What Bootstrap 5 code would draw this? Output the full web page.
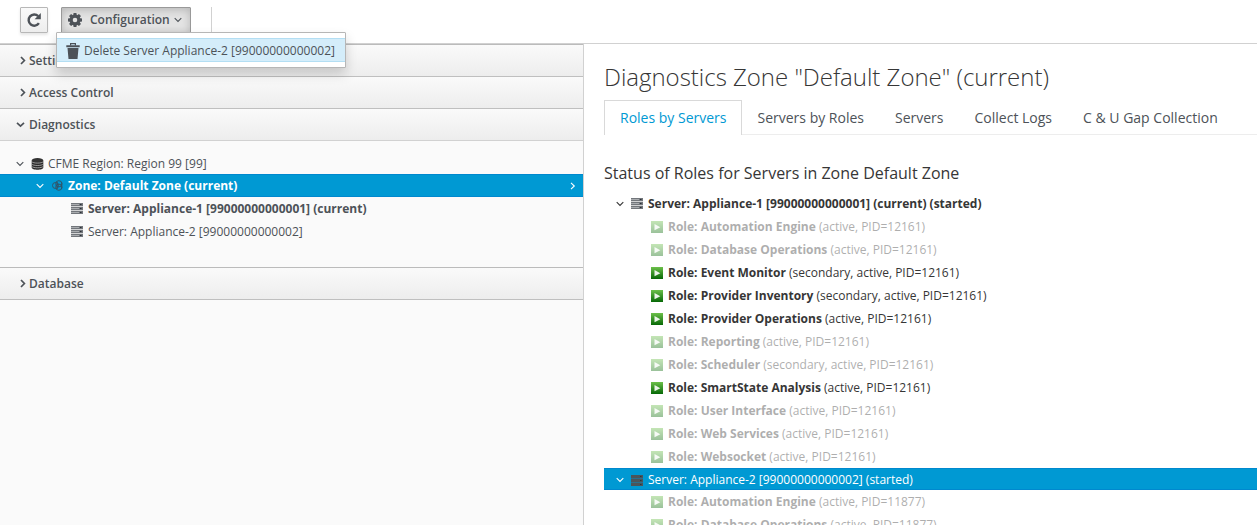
<!DOCTYPE html>
<html lang="en">
<head>
<meta charset="utf-8">
<title>Configuration: Diagnostics</title>
<link href="https://cdn.jsdelivr.net/npm/bootstrap@5.3.0/dist/css/bootstrap.min.css" rel="stylesheet">
<style>
body{font-family:"Open Sans","Noto Sans",sans-serif;font-size:12px;line-height:20px;color:#363636;height:525px;overflow:hidden;background:#fff}
svg{display:block;flex:none}
.topbar{height:44px;padding:7px 0 0 20px;border-bottom:1px solid #d1d1d1}
.tool{height:26px;padding:0;border:1px solid #b7b7b7;border-radius:1px;background:linear-gradient(#fafafa,#ededed);color:#4d5258;font-size:12px;font-weight:600;line-height:22px;box-shadow:0 2px 3px rgba(3,3,3,.1)}
.tool.open{background:#e3e3e3;border-color:#999;box-shadow:inset 0 2px 8px rgba(3,3,3,.2)}
.tool:hover{color:#4d5258}
.tool-sep{width:1px;height:25px;background:#d1d1d1;margin-left:20px}
.tool-menu{top:25px;left:-5px;width:290px;height:36px;padding:5px 0;border:1px solid #b6b6b6;border-radius:1px;box-shadow:0 6px 12px rgba(0,0,0,.175);margin:0}
.tool-menu .dropdown-item{height:24px;padding:2px 0 0 9px;font-size:12px;line-height:22px;background:#d4edfa;border:solid #b3def3;border-width:1px 0;color:#4d5258}
.sidebar{width:584px;height:481px;background:#fafafa;border-right:1px solid #d1d1d1;color:#4d5258}
.sidebar .heading{height:32px;padding-left:18px;border-bottom:1px solid #bfbfbf;background:linear-gradient(#fafafa,#ededed);font-weight:600;gap:2px}
.sidebar .heading.first{height:33px;border-top:1px solid #bbb}
.sidebar .heading.last{height:33px;border-top:1px solid #bbb}
.sidebar .heading.expanded{border-bottom-color:#d1d1d1}
.tree-area{height:126px;padding-top:11px}
.tree-row{height:23px;white-space:pre}
.tree-row .node-icon{margin-right:4px}
.tree-row.chosen{background:#0099d3;border:solid #0088ce;border-width:1px 0;color:#fff}
.main{padding:0 0 0 20px;min-width:0}
.main h1{font-size:24px;font-weight:300;line-height:26px;margin:20px 0 10px;white-space:nowrap;letter-spacing:-.02px}
.main h3{font-size:16px;font-weight:400;line-height:18px;margin:29px 0 10px}
.main .nav-tabs{height:35px;border-bottom:1px solid #ededed;font-size:14px;line-height:20px}
.main .nav-tabs .nav-link{height:35px;border:1px solid transparent;border-bottom:0;border-radius:0;padding:7px 14px 7px 15px;color:#4d5258;margin:0;white-space:nowrap}
.main .nav-tabs .nav-link.active{color:#0099d3;border-color:#d9d9d9;background:#fff}
.muted-row{opacity:.4}
.role-pad{padding-left:47px}
</style>
</head>
<body>
<svg width="0" height="0" class="position-absolute">
<defs>
<linearGradient id="green" x1="0" y1="0" x2="0" y2="1"><stop offset="0" stop-color="#6cc04a"/><stop offset="1" stop-color="#066806"/></linearGradient>
<symbol id="down" viewBox="0 0 8 8"><path d="M.7 2.2 4 5.5 7.3 2.2" fill="none" stroke="currentColor" stroke-width="1.1"/></symbol>
<symbol id="down-b" viewBox="0 0 9 9"><path d="M1 2.8 4.5 6.1 8 2.8" fill="none" stroke="currentColor" stroke-width="1.7"/></symbol>
<symbol id="right-b" viewBox="0 0 9 9"><path d="M3 1 6.4 4.5 3 8" fill="none" stroke="currentColor" stroke-width="1.7"/></symbol>
<symbol id="server" viewBox="0 0 12 11"><path d="M0 0h12v3H0zM0 4h12v3H0zM0 8h12v3H0z" fill="#72767b"/><path d="M0 1.5h8M0 5.5h8M0 9.5h8" stroke="#a9acaf"/><path d="M9 1h1.5v1H9zM9 5h1.5v1H9zM9 9h1.5v1H9z" fill="#292e34"/><path d="M0 3.5h12M0 7.5h12" stroke="#d2d3d4"/></symbol>
<symbol id="server-on" viewBox="0 0 12 11"><path d="M0 0h12v3H0zM0 4h12v3H0zM0 8h12v3H0z" fill="#4b555b"/><path d="M0 3.5h12M0 7.5h12" stroke="#2b6f8e"/><path d="M9 1h1.5v1H9zM9 5h1.5v1H9zM9 9h1.5v1H9z" fill="#263842"/></symbol>
<symbol id="role" viewBox="0 0 12 12"><path d="M0 0h12v12H0z" fill="url(#green)"/><path d="M3.5 3v6.3L9.3 6.2z" fill="#fff" fill-opacity=".9"/></symbol>
</defs>
</svg>

<header class="topbar d-flex align-items-start">
  <button class="btn tool d-flex align-items-center justify-content-center" style="width:28px" aria-label="Reload">
    <svg width="16" height="16" viewBox="0 0 16 16"><path d="M12.9 11.2A5.6 5.6 0 1 1 12.2 4.1" fill="none" stroke="#4d5258" stroke-width="2.4"/><path d="M14.8 1v6.2H8.6z" fill="#4d5258"/></svg>
  </button>
  <div class="position-relative" style="margin-left:13px">
    <button class="btn tool open d-flex align-items-center" style="width:130px;padding-left:6px">
      <svg width="14" height="14" viewBox="-7 -7 14 14"><g fill="#4d5258"><path id="cog" d="M-1.4-7h2.8l.6 3h-4zM-1.4 7h2.8l.6-3h-4zM-7-1.4v2.8l3 .6v-4zM7-1.4v2.8l-3 .6v-4z"/><use href="#cog" transform="rotate(45)"/></g><circle r="3.8" fill="none" stroke="#4d5258" stroke-width="3"/></svg>
      <span style="margin:-1px 4px 0 8px">Configuration</span>
      <svg width="8" height="8"><use href="#down"/></svg>
    </button>
    <div class="dropdown-menu tool-menu show">
      <a class="dropdown-item d-flex align-items-center" href="#">
        <svg width="14" height="16" viewBox="0 0 14 16" style="margin-right:4px"><path d="M4.6 2.5V.7h4.8v1.8" fill="none" stroke="#4d5258" stroke-width="1.2"/><path d="M.3 2.2h13.4v2H.3zM1.5 5h11l-1 11h-9z" fill="#4d5258"/></svg>
        <span>Delete Server Appliance-2 [99000000000002]</span>
      </a>
    </div>
  </div>
  <div class="tool-sep"></div>
</header>

<div class="d-flex">
  <aside class="sidebar flex-shrink-0">
    <div class="heading first d-flex align-items-center"><svg width="9" height="9"><use href="#right-b"/></svg>Settings</div>
    <div class="heading d-flex align-items-center"><svg width="9" height="9"><use href="#right-b"/></svg>Access Control</div>
    <div class="heading expanded d-flex align-items-center"><svg width="9" height="9" style="margin-left:-2px;margin-right:2px"><use href="#down-b"/></svg>Diagnostics</div>
    <div class="tree-area">
      <div class="tree-row d-flex align-items-center" style="padding:2px 0 0 16px;height:22px"><svg width="8" height="8" style="margin-right:7px"><use href="#down"/></svg><svg class="node-icon" width="13" height="12" viewBox="0 0 13 12"><path d="M.7 2.4v7.2c0 3 11.6 3 11.6 0V2.4z" fill="#292929"/><ellipse cx="6.5" cy="2.3" rx="5.8" ry="2.2" fill="#333"/><path d="M.7 3.6c1.5 2 10.1 2 11.6 0M.7 6c1.5 2 10.1 2 11.6 0M.7 8.3c1.5 2 10.1 2 11.6 0" fill="none" stroke="#c9c9c9" stroke-width=".7"/></svg>CFME Region: Region 99 [99]</div>
      <div class="tree-row chosen fw-bold d-flex align-items-center" style="padding-left:36px"><svg width="8" height="8" style="margin-right:8px"><use href="#down"/></svg><svg width="11" height="11" viewBox="0 0 11 11" style="margin-right:5px"><g fill="none" stroke="#31556a" stroke-width="1"><circle cx="3.5" cy="5.5" r="3"/><circle cx="6.8" cy="3.8" r="3.1"/><circle cx="6.8" cy="7.2" r="3.1"/><path d="M5.2 2v7M9.8 2.5v6"/></g></svg>Zone: Default Zone (current)<svg class="ms-auto" width="7" height="8" viewBox="0 0 7 8" style="margin-right:7px"><path d="M2 .8 5.3 4 2 7.2" fill="none" stroke="#fff" stroke-width="1.1"/></svg></div>
      <div class="tree-row fw-bold d-flex align-items-center" style="padding-left:71px"><svg class="node-icon" width="13" height="11"><use href="#server" width="12" height="11"/></svg>Server: Appliance-1 [99000000000001] (current)</div>
      <div class="tree-row d-flex align-items-center" style="padding-left:71px"><svg class="node-icon" width="13" height="11"><use href="#server" width="12" height="11"/></svg>Server: Appliance-2 [99000000000002]</div>
    </div>
    <div class="heading last d-flex align-items-center"><svg width="9" height="9"><use href="#right-b"/></svg>Database</div>
  </aside>

  <main class="main flex-grow-1">
    <h1>Diagnostics Zone "Default Zone" (current)</h1>
    <ul class="nav nav-tabs flex-nowrap">
      <li class="nav-item"><a class="nav-link active" href="#">Roles by Servers</a></li>
      <li class="nav-item"><a class="nav-link" href="#">Servers by Roles</a></li>
      <li class="nav-item"><a class="nav-link" href="#">Servers</a></li>
      <li class="nav-item"><a class="nav-link" href="#">Collect Logs</a></li>
      <li class="nav-item"><a class="nav-link" href="#">C &amp; U Gap Collection</a></li>
    </ul>
    <h3>Status of Roles for Servers in Zone Default Zone</h3>
    <div>
      <div class="tree-row fw-bold d-flex align-items-center" style="padding-left:12px"><svg width="8" height="8" style="margin-right:7px"><use href="#down"/></svg><svg class="node-icon" width="13" height="11"><use href="#server" width="12" height="11"/></svg>Server: Appliance-1 [99000000000001] (current) (started)</div>
      <div class="tree-row role-pad muted-row d-flex align-items-center"><svg class="node-icon" style="margin-right:5px" width="12" height="12"><use href="#role"/></svg><b>Role: Automation Engine</b> (active, PID=12161)</div>
      <div class="tree-row role-pad muted-row d-flex align-items-center"><svg class="node-icon" style="margin-right:5px" width="12" height="12"><use href="#role"/></svg><b>Role: Database Operations</b> (active, PID=12161)</div>
      <div class="tree-row role-pad d-flex align-items-center"><svg class="node-icon" style="margin-right:5px" width="12" height="12"><use href="#role"/></svg><b>Role: Event Monitor</b> (secondary, active, PID=12161)</div>
      <div class="tree-row role-pad d-flex align-items-center"><svg class="node-icon" style="margin-right:5px" width="12" height="12"><use href="#role"/></svg><b>Role: Provider Inventory</b> (secondary, active, PID=12161)</div>
      <div class="tree-row role-pad d-flex align-items-center"><svg class="node-icon" style="margin-right:5px" width="12" height="12"><use href="#role"/></svg><b>Role: Provider Operations</b> (active, PID=12161)</div>
      <div class="tree-row role-pad muted-row d-flex align-items-center"><svg class="node-icon" style="margin-right:5px" width="12" height="12"><use href="#role"/></svg><b>Role: Reporting</b> (active, PID=12161)</div>
      <div class="tree-row role-pad muted-row d-flex align-items-center"><svg class="node-icon" style="margin-right:5px" width="12" height="12"><use href="#role"/></svg><b>Role: Scheduler</b> (secondary, active, PID=12161)</div>
      <div class="tree-row role-pad d-flex align-items-center"><svg class="node-icon" style="margin-right:5px" width="12" height="12"><use href="#role"/></svg><b>Role: SmartState Analysis</b> (active, PID=12161)</div>
      <div class="tree-row role-pad muted-row d-flex align-items-center"><svg class="node-icon" style="margin-right:5px" width="12" height="12"><use href="#role"/></svg><b>Role: User Interface</b> (active, PID=12161)</div>
      <div class="tree-row role-pad muted-row d-flex align-items-center"><svg class="node-icon" style="margin-right:5px" width="12" height="12"><use href="#role"/></svg><b>Role: Web Services</b> (active, PID=12161)</div>
      <div class="tree-row role-pad muted-row d-flex align-items-center"><svg class="node-icon" style="margin-right:5px" width="12" height="12"><use href="#role"/></svg><b>Role: Websocket</b> (active, PID=12161)</div>
      <div class="tree-row chosen d-flex align-items-center" style="padding:2px 0 0 12px;height:22px"><svg width="8" height="8" style="margin-right:7px"><use href="#down"/></svg><svg class="node-icon" width="13" height="11"><use href="#server-on" width="12" height="11"/></svg>Server: Appliance-2 [99000000000002] (started)</div>
      <div class="tree-row role-pad muted-row d-flex align-items-center"><svg class="node-icon" style="margin-right:5px" width="12" height="12"><use href="#role"/></svg><b>Role: Automation Engine</b> (active, PID=11877)</div>
      <div class="tree-row role-pad muted-row d-flex align-items-center"><svg class="node-icon" style="margin-right:5px" width="12" height="12"><use href="#role"/></svg><b>Role: Database Operations</b> (active, PID=11877)</div>
    </div>
  </main>
</div>
<script src="https://cdn.jsdelivr.net/npm/bootstrap@5.3.0/dist/js/bootstrap.bundle.min.js"></script>
</body>
</html>
